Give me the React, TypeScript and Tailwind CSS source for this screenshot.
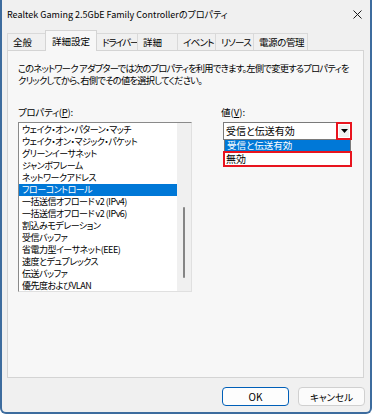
const font = "font-['Noto_Sans_CJK_JP','Noto_Sans',sans-serif] [font-feature-settings:'palt']"

const tabs = [
  { label: "全般", w: "w-[39px]", t: "tracking-[0px]" },
  { label: "詳細設定", w: "w-[52px]", t: "tracking-[0px]", active: true },
  { label: "ドライバー", w: "w-[42px]", t: "tracking-[-1.2px]" },
  { label: "詳細", w: "w-[41px]", t: "tracking-[0px]" },
  { label: "イベント", w: "w-[39px]", t: "tracking-[-0.8px]" },
  { label: "リソース", w: "w-[39px]", t: "tracking-[-0.8px]" },
  { label: "電源の管理", w: "w-[55px]", t: "tracking-[-0.4px]" },
]

const properties = [
  "ウェイク・オン・パターン・マッチ",
  "ウェイク・オン・マジック・パケット",
  "グリーンイーサネット",
  "ジャンボフレーム",
  "ネットワークアドレス",
  "フローコントロール",
  "一括送信オフロード v2 (IPv4)",
  "一括送信オフロード v2 (IPv6)",
  "割込みモデレーション",
  "受信バッファ",
  "省電力型イーサネット(EEE)",
  "速度とデュプレックス",
  "伝送バッファ",
  "優先度およびVLAN",
]

export default function App() {
  return (
    <div className={`${font} w-[372px] h-[414px] bg-[#f0f0f0] border-l-2 border-r-2 border-b-2 border-[#3d6c9e] rounded-bl-[6px] rounded-br-[6px] text-[10px] text-black overflow-hidden`}>
      {/* Title bar */}
      <div className="h-[29px] flex items-center justify-between pl-[5px] pr-[8px]">
        <span className="leading-[12px] text-[9px] whitespace-nowrap">Realtek Gaming 2.5GbE Family Controllerのプロパティ</span>
        <svg width="9" height="9" viewBox="0 0 9 9" className="mt-[-1px]">
          <path d="M0.5 0.5 L8.5 8.5 M8.5 0.5 L0.5 8.5" stroke="#1a1a1a" strokeWidth="1" />
        </svg>
      </div>

      {/* Tabs */}
      <div className="flex items-end h-[21px] pl-[5px] text-[9.5px]">
        {tabs.map((t, i) =>
          t.active ? (
            <div
              key={t.label}
              className={`${t.w} ${t.t} h-[21px] -ml-px relative z-10 -mb-px bg-[#f7f7f7] border border-b-0 border-[#d4d4d4] pl-[6px] pt-[4px] leading-[12px] whitespace-nowrap`}
            >
              {t.label}
            </div>
          ) : (
            <div
              key={t.label}
              className={`${t.w} ${t.t} h-[17px] ${i === 0 ? "" : "-ml-px"} bg-[#f0f0f0] border border-b-0 border-[#d9d9d9] pl-[5px] pt-[2px] leading-[12px] whitespace-nowrap overflow-hidden`}
            >
              {t.label}
            </div>
          )
        )}
      </div>

      {/* Panel */}
      <div className="ml-[5px] w-[357px] h-[328px] bg-[#f7f7f7] border border-[#d4d4d4] pt-[11px] pl-[10px]">
        <p className="leading-[12px] whitespace-nowrap text-[9.25px] tracking-[-0.75px]">
          このネットワーク アダプターでは次のプロパティを利用できます。左側で変更するプロパティを
          <br />
          クリックしてから、右側でその値を選択してください。
        </p>

        <div className="flex mt-[20px]">
          {/* Left: property list */}
          <div className="w-[174px]">
            <div className="h-[12px] leading-[12px] text-[9.5px] tracking-[-0.3px]">
              プロパティ(<span className="underline">P</span>):
            </div>
            <div className="mt-[4px] h-[170px] flex bg-white border-t border-l border-[#8a8a8a] border-r border-r-[#e0e0e0] border-b border-b-[#e0e0e0]">
              <div className="w-[158px] pt-[1px] text-[9px] tracking-[-0.5px]">
                {properties.map((p) => (
                  <div
                    key={p}
                    className={`h-[12px] leading-[12px] pl-[3px] whitespace-nowrap ${
                      p === "フローコントロール" ? "bg-[#0078d7] text-white" : ""
                    }`}
                  >
                    {p}
                  </div>
                ))}
              </div>
              <div className="flex-1 bg-[#f0f0f0] flex justify-center pt-[84px]">
                <div className="w-[2px] h-[71px] rounded-full bg-[#858585]" />
              </div>
            </div>
          </div>

          {/* Right: value */}
          <div className="ml-[29px] w-[131px]">
            <div className="h-[12px] leading-[12px] text-[9.5px]">
              値(<span className="underline">V</span>):
            </div>
            <div className="mt-[4px] ml-[2px] w-[129px]">
              <div className="relative h-[18px] bg-white border border-[#7a7a7a] flex items-center pl-[2px] leading-[12px]">
                受信と伝送有効
                <div className="absolute right-[-1px] top-[-1px] w-[16px] h-[18px] border-2 border-[#e8141e] bg-white flex items-center justify-center">
                  <div className="w-[10px] h-[12px] bg-[#f0f0f0] flex items-center justify-center">
                    <svg width="7" height="4" viewBox="0 0 7 4">
                      <path d="M0 0 H7 L3.5 4 Z" fill="#000" />
                    </svg>
                  </div>
                </div>
              </div>
              <div className="mx-[1px] h-[11px] bg-[#0078d7] text-white text-[9.5px] leading-[11px] pl-[2px] border-l border-r border-[#7a7a7a]">
                受信と伝送有効
              </div>
              <div className="h-[16px] border-2 border-[#e8141e] bg-white pl-[1px] leading-[12px]">
                無効
              </div>
            </div>
          </div>
        </div>
      </div>

      {/* Buttons */}
      <div className="flex justify-end gap-[9px] pr-[5px] mt-[9px]">
        <button className="w-[67px] h-[19px] rounded-[4px] bg-[#fdfdfd] border border-[#005fb8] leading-[12px]">
          OK
        </button>
        <button className="w-[67px] h-[19px] rounded-[4px] bg-[#fbfbfb] border border-[#d0d0d0] leading-[12px] text-[9.5px]">
          キャンセル
        </button>
      </div>
    </div>
  )
}
